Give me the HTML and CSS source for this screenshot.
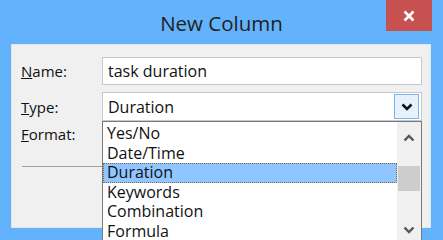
FILE: index.html
```html
<!DOCTYPE html>
<html lang="en">
<head>
    <meta charset="UTF-8">
    <title>New Column</title>
    <link rel="stylesheet" href="styles.css">
</head>
<body>
    <div class="window">
        <div class="titlebar">
            <span></span>
            <h1 class="title">New Column</h1>
            <button class="close-btn">
                <svg width="14" height="14" viewBox="0 0 14 14">
                    <path d="M2.5 2.5 L11.5 11.5 M11.5 2.5 L2.5 11.5" stroke="#fff" stroke-width="2.6" fill="none"/>
                </svg>
            </button>
        </div>

        <div class="panel">
            <div class="row">
                <label class="label"><u>N</u>ame:</label>
                <div class="textbox">task duration</div>
            </div>
            <div class="row row-type">
                <label class="label"><u>T</u>ype:</label>
                <div class="combo">
                    <span>Duration</span>
                    <span class="combo-btn">
                        <svg width="12" height="8" viewBox="0 0 12 8">
                            <path d="M1.5 1.5 L6 6 L10.5 1.5" stroke="#111" stroke-width="2.6" fill="none"/>
                        </svg>
                    </span>
                </div>
            </div>
            <div class="row row-format">
                <label class="label"><u>F</u>ormat:</label>
            </div>
            <div class="separator"></div>

            <!-- open dropdown of the Type combo -->
            <div class="dropdown">
                <ul class="options">
                    <li>Yes/No</li>
                    <li>Date/Time</li>
                    <li class="selected">Duration</li>
                    <li>Keywords</li>
                    <li>Combination</li>
                    <li>Formula</li>
                </ul>
                <div class="scrollbar">
                    <svg class="arrow" width="12" height="8" viewBox="0 0 12 8">
                        <path d="M1.5 6.5 L6 2 L10.5 6.5" stroke="#555" stroke-width="2.4" fill="none"/>
                    </svg>
                    <div class="track">
                        <div class="thumb"></div>
                    </div>
                    <svg class="arrow" width="12" height="8" viewBox="0 0 12 8">
                        <path d="M1.5 1.5 L6 6 L10.5 1.5" stroke="#555" stroke-width="2.4" fill="none"/>
                    </svg>
                </div>
            </div>
        </div>
    </div>
</body>
</html>
```

FILE: styles.css
```css
:root {
    --frame: #63b3fc;
    --close: #c75050;
    --panel: #f0f0f0;
    --field-border: #c8c8c8;
    --list-border: #7a7a7a;
    --highlight: #8fc6ff;
    --text: #111;
}

* {
    margin: 0;
    padding: 0;
    box-sizing: border-box;
}

body {
    width: 443px;
    height: 240px;
    overflow: hidden;
    background: var(--frame);
    font-family: 'Open Sans', 'Noto Sans', sans-serif;
    color: var(--text);
}

.window {
    height: 240px;
}

.titlebar {
    height: 44px;
    display: grid;
    grid-template-columns: 1fr auto 1fr;
    align-items: start;
}

.title {
    font-size: 20.5px;
    font-weight: 400;
    color: #222;
    margin-top: 9px;
    line-height: 28px;
}

.close-btn {
    justify-self: end;
    width: 46px;
    height: 31px;
    margin-right: 11px;
    border: none;
    background: var(--close);
    display: flex;
    align-items: center;
    justify-content: center;
}

.panel {
    position: relative;
    margin: 0 12px 0 11px;
    height: 184px;
    background: var(--panel);
    border: 1px solid #dce7f2;
    padding: 12px 8px 0 9px;
}

.row {
    display: flex;
    align-items: center;
    height: 28px;
}

.row-type {
    margin-top: 7px;
    height: 29px;
}

.row-format {
    margin-top: 2px;
    height: 22px;
}

.label {
    width: 81px;
    font-size: 15px;
}

.textbox,
.combo {
    flex: 1;
    height: 100%;
    background: #fff;
    border: 1px solid var(--field-border);
    font-size: 16px;
    padding-left: 5px;
    display: flex;
    align-items: center;
}

.combo {
    justify-content: space-between;
    padding-right: 2px;
}

.combo-btn {
    width: 25px;
    height: 25px;
    background: #e5f1fb;
    border: 1px solid #7eb4ea;
    display: flex;
    align-items: center;
    justify-content: center;
}

.separator {
    margin: 21px 0 0 1px;
    height: 1px;
    background: #a0a0a0;
}

.dropdown {
    position: absolute;
    left: 90px;
    top: 76px;
    width: 320px;
    height: 130px;
    background: #fff;
    border: 1px solid var(--list-border);
    display: flex;
}

.options {
    list-style: none;
    flex: 1;
    padding-top: 2px;
    font-size: 16px;
}

.options li {
    height: 19.5px;
    line-height: 19.5px;
    padding-left: 4px;
}

.options .selected {
    background: var(--highlight);
    outline: 1px dotted #8a6a40;
    outline-offset: -1px;
}

.scrollbar {
    width: 24px;
    background: var(--panel);
    display: flex;
    flex-direction: column;
    align-items: center;
    padding: 12px 0 16px;
}

.track {
    flex: 1;
    width: 100%;
    padding: 0 1px;
}

.thumb {
    margin-top: 24px;
    height: 25px;
    background: #cdcdcd;
}

.arrow {
    flex: none;
}
```
